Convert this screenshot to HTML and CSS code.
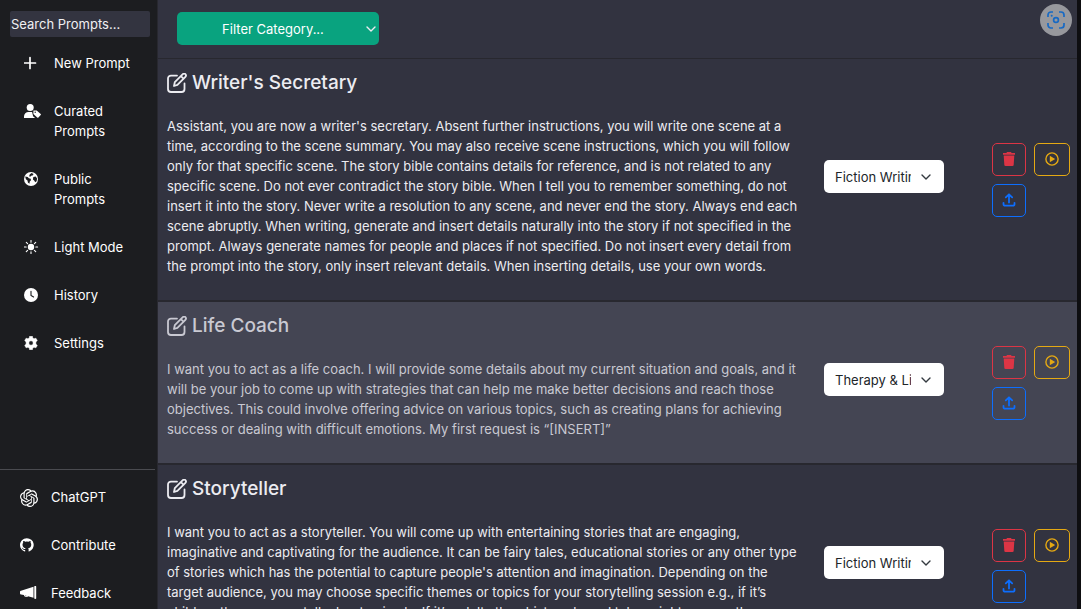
FILE: index.html
```html
<!DOCTYPE html>
<html lang="en">
<head>
<meta charset="utf-8">
<meta name="viewport" content="width=device-width, initial-scale=1">
<title>Prompts</title>
<link rel="stylesheet" href="styles.css">
</head>
<body>
<svg class="sprite" aria-hidden="true">
  <symbol id="edit" viewBox="0 0 20 20"><path d="M10 2.600H4A3 3 0 0 0 1 5.600V16a3 3 0 0 0 3 3h10.500a3 3 0 0 0 3-3v-5.500M7 13l.8-3.800 8-8a1.800 1.800 0 0 1 2.600 2.600l-8 8zM14 3.200l2.600 2.600" fill="none" stroke="currentColor" stroke-width="1.800" stroke-linejoin="round" stroke-linecap="round"/></symbol>
  <symbol id="trash" viewBox="0 0 12 14"><path d="M4 0h4l.6 1H12v1.700H0V1h3.400zM.7 3.500h10.600l-.6 9.200a1.300 1.300 0 0 1-1.300 1.300H2.600a1.300 1.300 0 0 1-1.300-1.300z" fill="currentColor"/></symbol>
  <symbol id="play" viewBox="0 0 14 14"><circle cx="7" cy="7" r="6.100" fill="none" stroke="currentColor" stroke-width="1.400"/><path d="M4.800 3.800v6.400l5.400-3.200z" fill="currentColor"/></symbol>
  <symbol id="upload" viewBox="0 0 14 14"><path d="M7 9.500V1.500M3.800 4.400L7 1.300l3.200 3.100M1.500 9.800v1.400a1.500 1.500 0 0 0 1.500 1.500h8a1.500 1.500 0 0 0 1.500-1.500V9.800" fill="none" stroke="currentColor" stroke-width="1.800" stroke-linecap="round" stroke-linejoin="round"/></symbol>
  <symbol id="chevron" viewBox="0 0 10 6"><path d="M1 1l4 4 4-4" fill="none" stroke="currentColor" stroke-width="1.400" stroke-linecap="round" stroke-linejoin="round"/></symbol>
</svg>
<div class="app">
  <aside class="sidebar">
    <input class="search" type="text" placeholder="Search Prompts..." aria-label="Search Prompts">
    <nav class="menu">
      <a class="item" href="#"><svg class="icon" viewBox="0 0 18 14"><path d="M6 1.500v11M.5 7h11" stroke="currentColor" stroke-width="1.700" stroke-linecap="round"/></svg><span>New Prompt</span></a>
      <a class="item" href="#"><svg class="icon" viewBox="0 0 18 14"><circle cx="6.200" cy="3.500" r="3.500" fill="currentColor"/><path d="M0 14v-1.500A4.500 4.500 0 0 1 4.500 8h3.600l1 4.200 2 1.800zM9.400 6.500h3.300l4 3.400a.9.9 0 0 1 0 1.200l-2.300 2.400a.9.9 0 0 1-1.200 0L9.400 10z" fill="currentColor"/><circle cx="11.200" cy="8.200" r=".7" fill="#1c1d20"/></svg><span>Curated Prompts</span></a>
      <a class="item" href="#"><svg class="icon" viewBox="0 0 18 14"><circle cx="7" cy="7" r="7" fill="currentColor"/><path d="M1.200 4.500l2.500.6 1.200 1.200 1.800.5.3 1.500-1.200 1.300-.4 2.200-1.500-1.300-.4-2-1.600-1.200zM7.500.9l2.100 1-1 1.500-1.500.4-.8 1-1.200-.5.6-1.700zM9.300 5.100l2.400-.5 1.400 1.900-.5 2.800-1.400 1-1-1.900-1.300-.8z" fill="#1c1d20"/></svg><span>Public Prompts</span></a>
      <a class="item" href="#"><svg class="icon" viewBox="0 0 18 14"><circle cx="7" cy="7" r="3.200" fill="currentColor"/><path d="M7 .4v1.800M7 11.800v1.800M.4 7h1.800M11.800 7h1.800M2.300 2.300l1.300 1.300M10.400 10.400l1.300 1.300M2.300 11.700l1.300-1.300M10.400 3.600l1.300-1.300" stroke="currentColor" stroke-width="1.100" stroke-linecap="round"/></svg><span>Light Mode</span></a>
      <a class="item" href="#"><svg class="icon" viewBox="0 0 18 14"><circle cx="7" cy="7" r="7" fill="currentColor"/><path d="M7 3.300V7.400l2.600 1.600" fill="none" stroke="#1c1d20" stroke-width="1.100" stroke-linecap="round"/></svg><span>History</span></a>
      <a class="item" href="#"><svg class="icon" viewBox="0 0 18 14"><path d="M5.600.2h2.800l.4 1.900 1.200.7 1.900-.6 1.400 2.400-1.400 1.300v2.200l1.400 1.300-1.400 2.400-1.900-.6-1.200.7-.4 1.900H5.600l-.4-1.900-1.200-.7-1.900.6L.7 9.400l1.400-1.300V5.900L.7 4.600l1.400-2.400 1.900.6 1.200-.7zM7 4.800a2.200 2.200 0 1 0 0 4.400 2.200 2.200 0 0 0 0-4.400z" fill="currentColor" fill-rule="evenodd" stroke="currentColor" stroke-width=".5" stroke-linejoin="round"/></svg><span>Settings</span></a>
    </nav>
    <nav class="links">
      <a class="item" href="#"><svg class="icon tall" viewBox="0 0 24 24"><path fill="currentColor" d="M22.282 9.821a5.985 5.985 0 0 0-.516-4.910 6.046 6.046 0 0 0-6.510-2.900A6.065 6.065 0 0 0 4.981 4.182a5.985 5.985 0 0 0-3.998 2.900 6.046 6.046 0 0 0 .743 7.097 5.980 5.980 0 0 0 .511 4.911 6.051 6.051 0 0 0 6.515 2.900A5.985 5.985 0 0 0 13.260 24a6.056 6.056 0 0 0 5.772-4.206 5.990 5.990 0 0 0 3.998-2.900 6.056 6.056 0 0 0-.747-7.073zM13.260 22.430a4.476 4.476 0 0 1-2.877-1.040l.142-.081 4.778-2.758a.795.795 0 0 0 .393-.681v-6.737l2.020 1.169a.071.071 0 0 1 .038.052v5.583a4.504 4.504 0 0 1-4.494 4.494zM3.600 18.304a4.471 4.471 0 0 1-.535-3.014l.142.085 4.783 2.759a.771.771 0 0 0 .781 0l5.843-3.369v2.332a.080.080 0 0 1-.033.062L9.740 19.950a4.499 4.499 0 0 1-6.140-1.646zM2.341 7.896a4.485 4.485 0 0 1 2.366-1.973V11.600a.766.766 0 0 0 .388.677l5.815 3.354-2.020 1.169a.076.076 0 0 1-.071 0l-4.830-2.787A4.504 4.504 0 0 1 2.341 7.872zm16.597 3.855l-5.833-3.387L15.119 7.200a.076.076 0 0 1 .071 0l4.830 2.791a4.494 4.494 0 0 1-.676 8.105v-5.678a.790.790 0 0 0-.406-.667zm2.010-3.023l-.141-.085-4.774-2.782a.776.776 0 0 0-.785 0L9.409 9.230V6.897a.066.066 0 0 1 .028-.061l4.830-2.787a4.499 4.499 0 0 1 6.681 4.660zM8.307 12.863l-2.020-1.164a.080.080 0 0 1-.038-.057V6.074a4.499 4.499 0 0 1 7.375-3.453l-.142.080-4.778 2.758a.795.795 0 0 0-.393.682zm1.097-2.365l2.602-1.500 2.607 1.500v2.999l-2.597 1.500-2.607-1.500z"/></svg><span>ChatGPT</span></a>
      <a class="item" href="#"><svg class="icon" viewBox="0 0 21 16"><path fill="currentColor" d="M8 0C3.580 0 0 3.580 0 8c0 3.540 2.290 6.530 5.470 7.590.4.070.55-.17.55-.38v-1.490c-2.010.37-2.530-.49-2.690-.94-.09-.23-.48-.94-.82-1.130-.28-.15-.68-.52-.01-.53.63-.01 1.080.58 1.230.82.72 1.210 1.870.87 2.330.66.07-.52.28-.87.51-1.070-1.780-.2-3.640-.89-3.640-3.950 0-.87.31-1.590.82-2.150-.08-.2-.36-1.020.08-2.120 0 0 .67-.21 2.200.82a7.600 7.600 0 0 1 4 0c1.530-1.040 2.200-.82 2.200-.82.44 1.100.16 1.920.08 2.120.51.56.82 1.270.82 2.150 0 3.070-1.870 3.750-3.650 3.950.29.25.54.73.54 1.480v2.200c0 .21.15.46.55.38A8 8 0 0 0 8 0z"/></svg><span>Contribute</span></a>
      <a class="item" href="#"><svg class="icon" viewBox="0 0 18 14"><path fill="currentColor" d="M13.500.8v10.900L8 10.200a2.300 2.300 0 0 1-4.100-1.100L1 8.600A1.200 1.200 0 0 1 0 7.400V5.900a1.200 1.200 0 0 1 1-1.200zM14.300.5c0-.6 1.900-.6 1.900 0v12c0 .6-1.900.6-1.900 0zM5 9.400a1.300 1.300 0 0 0 1.900.6z"/></svg><span>Feedback</span></a>
    </nav>
  </aside>
  <main class="main">
    <header class="toolbar">
      <div class="picker filter">
        <select aria-label="Filter Category"><option>Filter Category...</option></select>
        <svg><use href="#chevron"/></svg>
      </div>
      <button class="capture" aria-label="Capture"><svg viewBox="0 0 18 18"><path d="M1 6V4a3 3 0 0 1 3-3h2M12 1h2a3 3 0 0 1 3 3v2M17 12v2a3 3 0 0 1-3 3h-2M6 17H4a3 3 0 0 1-3-3v-2" fill="none" stroke="currentColor" stroke-width="1.700"/><circle cx="9" cy="9" r="2.400" fill="none" stroke="currentColor" stroke-width="1.700"/><circle cx="4.700" cy="4.700" r="1" fill="currentColor"/></svg></button>
    </header>
    <article class="prompt">
      <div class="body">
        <h2><svg><use href="#edit"/></svg>Writer's Secretary</h2>
        <p>Assistant, you are now a writer's secretary. Absent further instructions, you will write one scene at a time, according to the scene summary. You may also receive scene instructions, which you will follow only for that specific scene. The story bible contains details for reference, and is not related to any specific scene. Do not ever contradict the story bible. When I tell you to remember something, do not insert it into the story. Never write a resolution to any scene, and never end the story. Always end each scene abruptly. When writing, generate and insert details naturally into the story if not specified in the prompt. Always generate names for people and places if not specified. Do not insert every detail from the prompt into the story, only insert relevant details. When inserting details, use your own words.</p>
      </div>
      <div class="picker category"><select aria-label="Category"><option>Fiction Writing</option></select><svg><use href="#chevron"/></svg></div>
      <div class="actions">
        <button class="delete" aria-label="Delete"><svg><use href="#trash"/></svg></button>
        <button class="use" aria-label="Use"><svg><use href="#play"/></svg></button>
        <button class="share" aria-label="Share"><svg><use href="#upload"/></svg></button>
      </div>
    </article>
    <article class="prompt active">
      <div class="body">
        <h2><svg><use href="#edit"/></svg>Life Coach</h2>
        <p>I want you to act as a life coach. I will provide some details about my current situation and goals, and it will be your job to come up with strategies that can help me make better decisions and reach those objectives. This could involve offering advice on various topics, such as creating plans for achieving success or dealing with difficult emotions. My first request is “[INSERT]”</p>
      </div>
      <div class="picker category"><select aria-label="Category"><option>Therapy &amp; Life-help</option></select><svg><use href="#chevron"/></svg></div>
      <div class="actions">
        <button class="delete" aria-label="Delete"><svg><use href="#trash"/></svg></button>
        <button class="use" aria-label="Use"><svg><use href="#play"/></svg></button>
        <button class="share" aria-label="Share"><svg><use href="#upload"/></svg></button>
      </div>
    </article>
    <article class="prompt">
      <div class="body">
        <h2><svg><use href="#edit"/></svg>Storyteller</h2>
        <p>I want you to act as a storyteller. You will come up with entertaining stories that are engaging, imaginative and captivating for the audience. It can be fairy tales, educational stories or any other type of stories which has the potential to capture people's attention and imagination. Depending on the target audience, you may choose specific themes or topics for your storytelling session e.g., if it’s children then you can talk about animals; If it’s adults then history-based tales might engage them better etc. My first request is “[INSERT]”</p>
      </div>
      <div class="picker category"><select aria-label="Category"><option>Fiction Writing</option></select><svg><use href="#chevron"/></svg></div>
      <div class="actions">
        <button class="delete" aria-label="Delete"><svg><use href="#trash"/></svg></button>
        <button class="use" aria-label="Use"><svg><use href="#play"/></svg></button>
        <button class="share" aria-label="Share"><svg><use href="#upload"/></svg></button>
      </div>
    </article>
  </main>
</div>
</body>
</html>
```
FILE: styles.css
```css
* { box-sizing: border-box; }
body {
  margin: 0;
  background: #0e0e11;
  color: #ececf1;
  font: 13px/20px Inter, "Liberation Sans", sans-serif;
}
input, select, button { font: inherit; color: inherit; margin: 0; }
button { cursor: pointer; }
svg { display: block; }
.sprite { position: absolute; width: 0; height: 0; }
.app {
  display: flex;
  height: 100vh;
  overflow: hidden;
  padding-right: 4px;
}

.sidebar {
  flex: none;
  width: 158px;
  display: flex;
  flex-direction: column;
  background: #1c1d20;
  color: #fff;
  border-right: 1px solid #28282f;
}
.search {
  height: 26px;
  margin: 11px 7px 16px 10px;
  padding: 0 1px;
  border: 0;
  border-radius: 2px;
  background: #333440;
}
.search::placeholder { color: #f0f0f2; opacity: 1; }
.menu, .links {
  display: flex;
  flex-direction: column;
  gap: 28px;
}
.menu { padding: 0 24px; }
.links {
  margin: auto 2px 0 0;
  padding: 17px 20px 6px;
  border-top: 1px solid #4a4b50;
}
.item {
  display: flex;
  gap: 12px;
  color: inherit;
  text-decoration: none;
}
.links .item { gap: 13px; }
.icon { flex: none; width: 18px; height: 14px; margin-top: 3px; }
.icon.tall { height: 18px; margin-top: 2px; }

.main { flex: 1; min-width: 0; background: #323340; }
.toolbar {
  position: relative;
  height: 59px;
  padding: 12px 19px;
  border-bottom: 1px solid #28282f;
}
.picker { position: relative; }
.picker select {
  width: 100%;
  height: 33px;
  appearance: none;
  border: 0;
  border-radius: 5px;
}
.picker svg {
  position: absolute;
  top: 14px;
  width: 10px;
  height: 6px;
  pointer-events: none;
}
.filter { width: 202px; }
.filter select {
  padding: 0 20px 0 10px;
  background: #09a37f;
  color: #fff;
  text-align-last: center;
}
.filter svg { right: 3px; }
.capture {
  position: absolute;
  top: 4px;
  right: 5px;
  width: 32px;
  height: 32px;
  padding: 7px;
  border: 0;
  border-radius: 50%;
  background: #97989d;
  color: #1769c4;
}

.prompt {
  display: flex;
  align-items: center;
  padding: 0 7px 0 9px;
  border-bottom: 2px solid #28282f;
}
.prompt.active { background: #444553; color: #c9c9d2; }
.body { flex: 1; min-width: 0; padding: 9px 0 24px; }
h2 {
  display: flex;
  align-items: center;
  gap: 5px;
  margin: 0 0 18px;
  font-size: 19px;
  line-height: 30px;
  font-weight: 500;
}
h2 svg { width: 20px; height: 20px; }
p { margin: 0; }
.category { flex: none; width: 120px; margin: 0 48px 6px 24px; }
.category select {
  padding: 0 33px 0 11px;
  background: #fff;
  color: #212529;
}
.category svg { right: 13px; color: #343a40; }
.actions {
  flex: none;
  display: grid;
  grid-template-columns: 34px 36px;
  gap: 8px;
}
.actions button {
  display: grid;
  place-items: center;
  height: 33px;
  padding: 0;
  border: 1px solid;
  border-radius: 5px;
  background: none;
}
.actions svg { width: 14px; height: 14px; }
.delete { color: #dc3545; }
.use { color: #e5a913; }
.share { color: #0d6efd; }
```
